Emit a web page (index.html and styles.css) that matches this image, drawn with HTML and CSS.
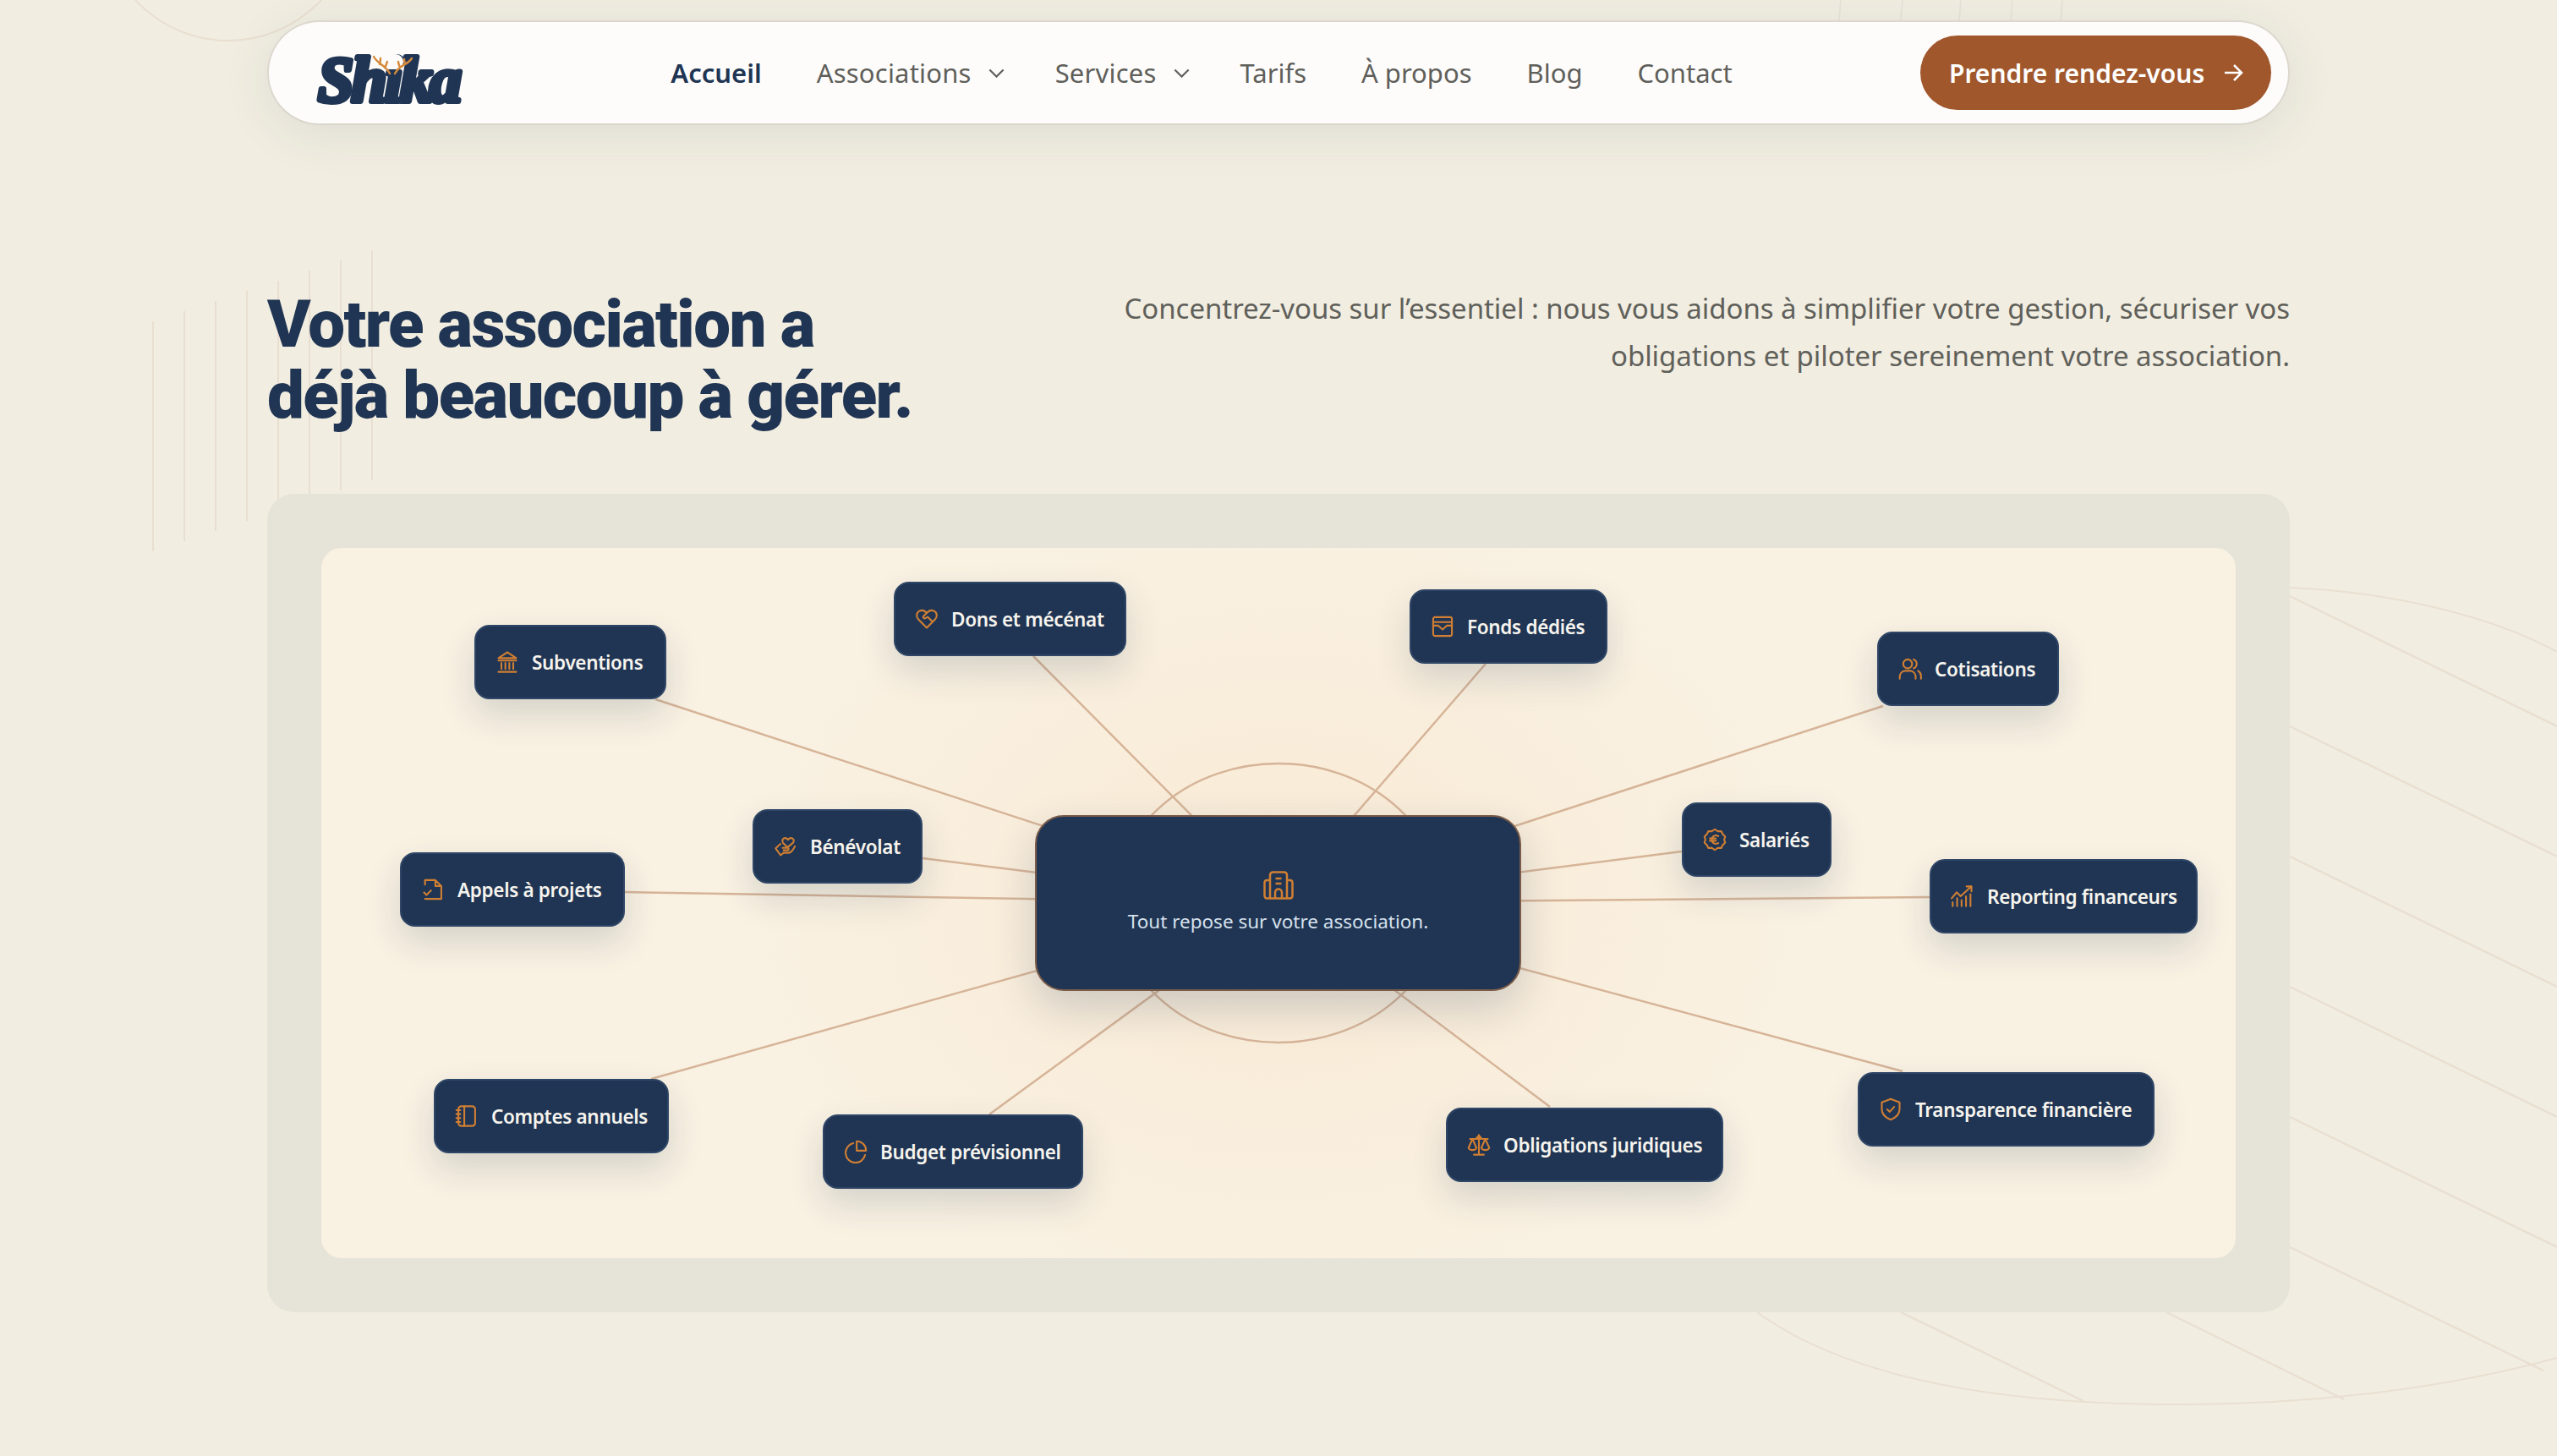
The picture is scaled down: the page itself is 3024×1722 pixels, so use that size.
FILE: index.html
```html
<!DOCTYPE html>
<html lang="fr">
<head>
    <meta charset="UTF-8">
    <meta name="viewport" content="width=device-width, initial-scale=1.0">
    <title>Shika</title>
    <link rel="stylesheet" href="styles.css">
</head>
<body>
    <!-- decor de fond -->
    <svg class="decor" viewBox="0 0 3024 1722">
        <circle cx="270" cy="-102" r="150"/>
        <path d="M181 380V652M218 368V640M255 356V628M292 344V616M329 332V604M366 320V592M403 308V580M440 296V568"/>
        <path class="faint" d="M2177 0L2175 24M2250 0L2248 24M2319 0L2317 24M2380 0L2378 24M2439 0L2437 24"/>
        <path d="M2708 695C2830 700 2950 730 3024 771M2078 1552C2200 1640 2400 1662 2588 1661C2750 1660 2900 1640 3024 1606"/>
        <path class="diag" d="M2708 705L3024 859M2708 859L3024 1013M2708 1013L3024 1167M2708 1167L3024 1321M2708 1321L3024 1475M2708 1475L3008 1621M2562 1552L2772 1655M2248 1552L2464 1657"/>
    </svg>

    <div class="page">
        <!-- navigation -->
        <header class="navbar">
            <a class="logo" href="#">
                <svg viewBox="0 0 200 80">
                    <text class="logo-text" x="2" y="74" textLength="170">Shika</text>
                    <circle class="logo-mask" cx="94" cy="27" r="9"/>
                    <path class="logo-horns" d="M68 21C73 30 82 31 87 41M75 30C76 27 76 25 76 23M81 34C83 31 83 29 84 27M113 23C108 31 98 31 93 41M105 30C104 27 104 26 104 24M99 34C98 31 97 29 97 27"/>
                </svg>
            </a>
            <nav class="links">
                <a class="active" href="#">Accueil</a>
                <a class="drop" href="#">Associations <svg viewBox="0 0 14 8"><path d="M1 1l6 6 6-6"/></svg></a>
                <a class="drop" href="#">Services <svg viewBox="0 0 14 8"><path d="M1 1l6 6 6-6"/></svg></a>
                <a href="#">Tarifs</a>
                <a href="#">À propos</a>
                <a href="#">Blog</a>
                <a href="#">Contact</a>
            </nav>
            <a class="cta" href="#">Prendre rendez-vous
                <svg viewBox="0 0 24 24"><path d="M2 12h20M13 3l9 9-9 9"/></svg>
            </a>
        </header>

        <!-- titre -->
        <section class="intro">
            <h1>Votre association a<br>déjà beaucoup à gérer.</h1>
            <p>Concentrez-vous sur l’essentiel : nous vous aidons à simplifier votre gestion, sécuriser vos<br>obligations et piloter sereinement votre association.</p>
        </section>

        <!-- schema -->
        <section class="panel">
            <div class="stage">
                <svg class="wires" viewBox="0 0 2264 840">
                    <ellipse cx="1132" cy="420" rx="193" ry="165"/>
                    <path d="M395 179L1132 420M842 128L1132 420M1377 137L1132 420M1847 187L1132 420M1609 359L1132 420M1902 413L1132 420M1870 619L1132 420M1453 661L1132 420M790 670L1132 420M390 628L1132 420M359 407L1132 420M711 367L1132 420"/>
                </svg>

                <div class="node n-sub">
                    <svg viewBox="0 0 24 24"><path d="M12 2L3 8h18zM3 10.500h18M6 13v6M10 13v6M14 13v6M18 13v6M3 22h18"/></svg>
                    Subventions
                </div>
                <div class="node n-dons">
                    <svg viewBox="0 0 24 24"><path d="M12 21L3.500 12.500C1 10 1.500 5.500 4.500 4S10 3.500 12 6C14 3.500 16.500 2.500 19.500 4S23 10 20.500 12.500zM12 6L8.500 9.500C8 11 9.500 12 11 11L13 10L17 14"/></svg>
                    Dons et mécénat
                </div>
                <div class="node n-fonds">
                    <svg viewBox="0 0 24 24"><rect x="2.500" y="2.500" width="19" height="19" rx="2"/><path d="M2.500 7.500h19M2.500 11h5l4.500 4 4.500-4h5"/></svg>
                    Fonds dédiés
                </div>
                <div class="node n-coti">
                    <svg viewBox="0 0 24 24"><circle cx="9.500" cy="7" r="4.500"/><path d="M1.500 22v-3a6 6 0 0 1 6-5h4a6 6 0 0 1 6 5v3M15.500 2.500a4.800 4.800 0 0 1 0 9M20 14a6 6 0 0 1 3 5v3"/></svg>
                    Cotisations
                </div>
                <div class="node n-bene">
                    <svg viewBox="0 0 24 24"><path d="M14 13L9.500 8.500C8 6.500 9 3.500 11.500 3.500C13 3.500 13.800 4.300 14.500 5.200C15.200 4.300 16 3.500 17.500 3.500C20 3.500 21.500 6.500 19.500 8.500L14 13M2 14L7 9.500M2 14L7 21L10 18.500H15C18 18.500 20 15 21.500 12M9 13.500H14C15.500 13.500 15.500 16 14 16H10"/></svg>
                    Bénévolat
                </div>
                <div class="node n-appels">
                    <svg viewBox="0 0 24 24"><path d="M4 7V2.500H14.500L20.500 8.500V21.500H4M14.500 2.500V8.500H20.500M3 15L5.500 17.500L10 13"/></svg>
                    Appels à projets
                </div>
                <div class="node n-sala">
                    <svg viewBox="0 0 24 24"><path d="M12 1.500L15 3.500L18.500 3.500L20 6.500L22.500 9L21.500 12L22.500 15L20 17.500L18.500 20.500L15 20.500L12 22.500L9 20.500L5.500 20.500L4 17.500L1.500 15L2.500 12L1.500 9L4 6.500L5.500 3.500L9 3.500zM15.500 8.500C12.500 6.500 9 8.500 9 12C9 15.500 12.500 17.500 15.500 15.500M7 10.800h6M7 13.200h6"/></svg>
                    Salariés
                </div>
                <div class="node n-report">
                    <svg viewBox="0 0 24 24"><path d="M1 14L6 8L10 12L21 2M16 2h5v5M2 18v4M6.500 14v8M11 16v6M15.500 12v10M20 10v12"/></svg>
                    Reporting financeurs
                </div>
                <div class="node n-comptes">
                    <svg viewBox="0 0 24 24"><rect x="3.500" y="2" width="17" height="20" rx="3"/><path d="M9.500 2v20M1.500 6h4M1.500 10h4M1.500 14h4M1.500 18h4"/></svg>
                    Comptes annuels
                </div>
                <div class="node n-budget">
                    <svg viewBox="0 0 24 24"><path d="M9.500 3.500A10 10 0 1 0 21.500 15.500M13 1.500A9.500 9.500 0 0 1 22.500 11H13z"/></svg>
                    Budget prévisionnel
                </div>
                <div class="node n-oblig">
                    <svg viewBox="0 0 24 24"><path d="M12 2v19M7 22h10M3 6h18M5.500 6L1.500 15c1 3 7 3 8 0zM18.500 6L14.500 15c1 3 7 3 8 0zM12 2.500L9 6M12 2.500L15 6"/></svg>
                    Obligations juridiques
                </div>
                <div class="node n-trans">
                    <svg viewBox="0 0 24 24"><path d="M12 1.500L21 5V12C21 17.500 17 20.500 12 22.500C7 20.500 3 17.500 3 12V5zM8.500 12L11 14.500L15.500 9.500"/></svg>
                    Transparence financière
                </div>

                <div class="hub">
                    <svg viewBox="0 0 36 34"><path d="M8 32V5C8 3 9.500 1.500 11.500 1.500H24.500C26.500 1.500 28 3 28 5V32M8 11H4.500C2.500 11 1.500 12.500 1.500 14V29C1.500 31 2.500 32.500 4.500 32.500H31.500C33.500 32.500 34.500 31 34.500 29V14C34.500 12.500 33.500 11 31.500 11H28M14.500 9h7M14.500 15h7M14 32V26C14 23 16 21.500 18 21.500S22 23 22 26V32"/></svg>
                    <p>Tout repose sur votre association.</p>
                </div>
            </div>
        </section>
    </div>
</body>
</html>
```

FILE: styles.css
```css
*{
    margin: 0;
    padding: 0;
    box-sizing: border-box;
}
body{
    margin: 0;
    height: 1722px;
    overflow: hidden;
    position: relative;
    background-color: #f1ede1;
    font-family: "Noto Sans", "Open Sans", sans-serif;
}
a{
    color: inherit;
    text-decoration: none;
}
.decor{
    position: absolute;
    left: 0;
    top: 0;
    width: 3024px;
    height: 1722px;
    fill: none;
    stroke: #e9dfd1;
    stroke-width: 2;
}
.decor .diag{
    stroke-width: 2.500;
}
.decor .faint{
    stroke: #e8e4d8;
}
.page{
    position: relative;
    width: 2392px;
    margin: 0 auto;
    padding-top: 24px;
}

/* navigation */
.navbar{
    height: 124px;
    display: flex;
    align-items: center;
    justify-content: space-between;
    padding: 0 20px 0 56px;
    background-color: #fdfcfa;
    border: 2px solid #dcd8cf;
    border-bottom-color: #d9d5cb;
    border-radius: 62px;
    box-shadow: 0 10px 60px rgba(32, 53, 83, 0.09);
}
.logo{
    width: 197px;
    height: 80px;
    display: block;
}
.logo svg{
    width: 200px;
    height: 80px;
    display: block;
    overflow: visible;
}
.logo-text{
    font-family: "Liberation Serif", serif;
    font-style: italic;
    font-weight: 700;
    font-size: 76px;
    fill: #203553;
    stroke: #203553;
    stroke-width: 6;
    stroke-linejoin: round;
}
.logo-mask{
    fill: #fdfcfa;
}
.logo-horns{
    fill: none;
    stroke: #d58a3c;
    stroke-width: 2.500;
    stroke-linecap: round;
}
.links{
    display: flex;
    align-items: center;
    gap: 65px;
    font-size: 31px;
    color: #5f5f5b;
}
.links a.active{
    color: #203553;
    font-weight: 600;
}
.links .drop{
    display: flex;
    align-items: center;
    gap: 20px;
    letter-spacing: 0.2px;
}
.links svg{
    width: 19px;
    height: 11px;
    margin-right: -5px;
    fill: none;
    stroke: #5f5f5b;
    stroke-width: 1.600;
}
.cta{
    height: 88px;
    width: 415px;
    display: flex;
    align-items: center;
    gap: 22px;
    padding-left: 34px;
    border-radius: 44px;
    background-color: #a0572c;
    color: #fff;
    font-size: 30px;
    font-weight: 600;
}
.cta svg{
    width: 24px;
    height: 24px;
    fill: none;
    stroke: #fff;
    stroke-width: 2.500;
}

/* titre */
.intro{
    height: 436px;
    padding-top: 194px;
    display: flex;
    justify-content: space-between;
    align-items: flex-start;
}
.intro h1{
    font-family: Roboto, Inter, sans-serif;
    font-size: 78px;
    font-weight: 900;
    line-height: 84px;
    letter-spacing: -1.600px;
    color: #203553;
}
.intro p{
    font-size: 33px;
    line-height: 56px;
    letter-spacing: -0.050px;
    text-align: right;
    color: #60605a;
    margin-top: -5px;
}

/* schema */
.panel{
    height: 968px;
    padding: 64px;
    background-color: #e6e4d8;
    border-radius: 32px;
}
.stage{
    position: relative;
    height: 840px;
    border-radius: 24px;
    background: radial-gradient(ellipse 640px 480px at 50% 50%, #f9ead5, #f9f1e2);
}
.wires{
    position: absolute;
    left: 0;
    top: 0;
    width: 100%;
    height: 100%;
    fill: none;
    stroke: #d6b498;
    stroke-width: 2.500;
}
.node{
    position: absolute;
    height: 88px;
    display: flex;
    align-items: center;
    gap: 15px;
    padding-left: 23px;
    background-color: #203553;
    border: 2px solid #2f4667;
    border-radius: 18px;
    box-shadow: 0 18px 40px rgba(32, 53, 83, 0.16);
    color: #f6f4ee;
    font-size: 22.500px;
    letter-spacing: -0.330px;
    font-weight: 600;
    white-space: nowrap;
}
.node svg{
    flex: none;
    width: 28px;
    height: 28px;
    fill: none;
    stroke: #d07f33;
    stroke-width: 1.800;
    stroke-linejoin: round;
    stroke-linecap: round;
}
.n-sub{ left: 181px; top: 91px; width: 227px; }
.n-dons{ left: 677px; top: 40px; width: 275px; }
.n-fonds{ left: 1287px; top: 49px; width: 234px; }
.n-coti{ left: 1840px; top: 99px; width: 215px; }
.n-bene{ left: 510px; top: 309px; width: 201px; }
.n-appels{ left: 93px; top: 360px; width: 266px; }
.n-sala{ left: 1609px; top: 301px; width: 177px; }
.n-report{ left: 1902px; top: 368px; width: 317px; }
.n-comptes{ left: 133px; top: 628px; width: 278px; }
.n-budget{ left: 593px; top: 670px; width: 308px; }
.n-oblig{ left: 1330px; top: 662px; width: 328px; }
.n-trans{ left: 1817px; top: 620px; width: 351px; }
.hub{
    position: absolute;
    left: 844px;
    top: 316px;
    width: 575px;
    height: 208px;
    display: flex;
    flex-direction: column;
    align-items: center;
    padding-top: 64px;
    gap: 10px;
    background-color: #203553;
    border: 2px solid #7a5c49;
    border-radius: 34px;
    box-shadow: 0 20px 50px rgba(32, 53, 83, 0.2);
}
.hub svg{
    width: 36px;
    height: 34px;
    fill: none;
    stroke: #d07f33;
    stroke-width: 2.500;
    stroke-linejoin: round;
}
.hub p{
    font-size: 22.500px;
    color: #d6e1ed;
}
```
